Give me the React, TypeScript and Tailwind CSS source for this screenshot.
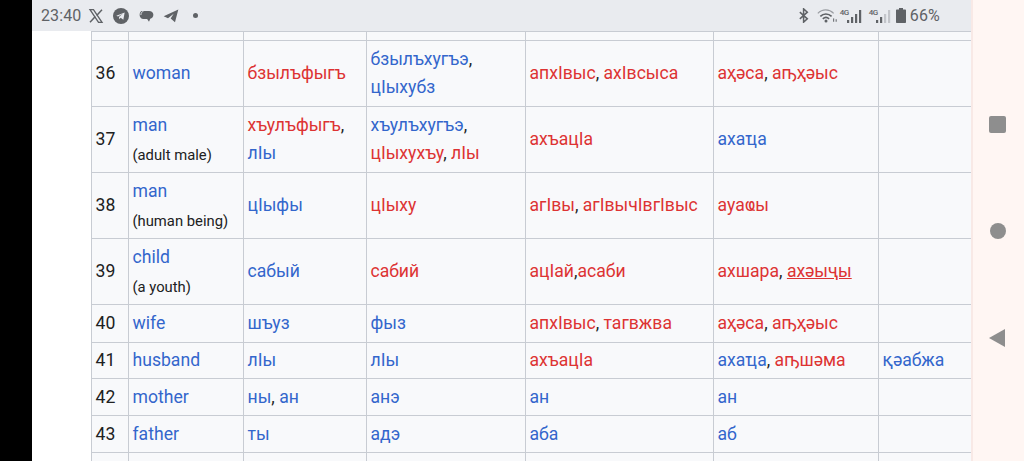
import React from "react";

type Part = { t: string; c?: "b" | "r" | "k"; u?: boolean };
const b = (t: string): Part => ({ t, c: "b" });
const r = (t: string): Part => ({ t, c: "r" });
const k = (t: string): Part => ({ t, c: "k" });

function Txt({ parts }: { parts: Part[] }) {
  return (
    <>
      {parts.map((p, i) => (
        <span
          key={i}
          className={
            (p.c === "b" ? "text-[#3366cc]" : p.c === "r" ? "text-[#dd3333]" : "text-[#202122]") +
            (p.u ? " underline" : "")
          }
        >
          {p.t}
        </span>
      ))}
    </>
  );
}

type Row = {
  n: string;
  en: string;
  sub?: string;
  h: string;
  cells: Part[][][];
};

const rows: Row[] = [
  {
    n: "36", en: "woman", h: "h-[66px]",
    cells: [
      [[r("бзылъфыгъ")]],
      [[b("бзылъхугъэ"), k(",")], [b("цIыхубз")]],
      [[r("апхIвыс"), k(", "), r("ахIвсыса")]],
      [[r("аҳәса"), k(", "), r("аҧҳәыс")]],
      [],
    ],
  },
  {
    n: "37", en: "man", sub: "(adult male)", h: "h-[66px]",
    cells: [
      [[r("хъулъфыгъ"), k(",")], [b("лIы")]],
      [[b("хъулъхугъэ"), k(",")], [r("цIыхухъу"), k(", "), r("лIы")]],
      [[r("ахъацIа")]],
      [[b("ахаҵа")]],
      [],
    ],
  },
  {
    n: "38", en: "man", sub: "(human being)", h: "h-[66px]",
    cells: [
      [[b("цIыфы")]],
      [[r("цIыху")]],
      [[r("агIвы"), k(", "), r("агIвычIвгIвыс")]],
      [[r("ауаҩы")]],
      [],
    ],
  },
  {
    n: "39", en: "child", sub: "(a youth)", h: "h-[66px]",
    cells: [
      [[b("сабый")]],
      [[r("сабий")]],
      [[r("ацIай"), k(","), r("асаби")]],
      [[r("ахшара"), k(", "), { t: "ахәыҷы", c: "r", u: true }]],
      [],
    ],
  },
  {
    n: "40", en: "wife", h: "h-[38px]",
    cells: [
      [[b("шъуз")]],
      [[b("фыз")]],
      [[r("апхIвыс"), k(", "), r("тагвжва")]],
      [[r("аҳәса"), k(", "), r("аҧҳәыс")]],
      [],
    ],
  },
  {
    n: "41", en: "husband", h: "h-[36px]",
    cells: [
      [[b("лIы")]],
      [[b("лIы")]],
      [[r("ахъацIа")]],
      [[b("ахаҵа"), k(", "), r("аҧшәма")]],
      [[b("қәабжа")]],
    ],
  },
  {
    n: "42", en: "mother", h: "h-[37px]",
    cells: [
      [[b("ны"), k(", "), b("ан")]],
      [[b("анэ")]],
      [[b("ан")]],
      [[b("ан")]],
      [],
    ],
  },
  {
    n: "43", en: "father", h: "h-[37px]",
    cells: [
      [[b("ты")]],
      [[b("адэ")]],
      [[b("аба")]],
      [[b("аб")]],
      [],
    ],
  },
];

const td = "border border-[#c8ccd3] bg-[#f8f9fb] pl-[3.5px] pr-[3px] pb-[1px] align-middle";

function Spacer({ h }: { h: string }) {
  return (
    <tr className={h}>
      {[0, 1, 2, 3, 4, 5, 6].map((i) => (
        <td key={i} className={td}></td>
      ))}
    </tr>
  );
}

function LeftIcons() {
  return (
    <div className="flex items-center text-[#5f6266]">
      <svg width="16" height="16" viewBox="0 0 24 24" className="ml-[7px]" fill="none" stroke="currentColor">
        <path d="M3 2.500h5.200L21 21.500h-5.200z" strokeWidth="2" />
        <path d="M21 2.500l-8 8.600M3 21.500l8-8.800" strokeWidth="2.200" />
      </svg>
      <svg width="16" height="16" viewBox="0 0 24 24" className="ml-[9px]">
        <circle cx="12" cy="12" r="12" fill="currentColor" />
        <path d="M5 11.800l12.500-5-2 11-4-3-2 2-.6-3.400 5.600-4.600-7 4z" fill="#e9ebef" />
      </svg>
      <svg width="15" height="14" viewBox="0 0 24 22" className="ml-[10px]" fill="currentColor">
        <path d="M5 3h11c4 0 7 2.400 7 6s-2.400 6-5 6.500L16 20l-3-4.200H7C3.500 15.800 1 13 1 9.500 1 6 2.500 3 5 3z" />
        <path d="M7 3.500C4.500 4 3 6.500 3 9.500" stroke="#e9ebef" strokeWidth="1.500" fill="none" />
      </svg>
      <svg width="16" height="15" viewBox="0 0 24 22" className="ml-[9px]" fill="currentColor">
        <path d="M1 12L23 2l-5 19-6.500-5.500 4.500-7-8.500 6.500z" />
      </svg>
      <span className="ml-[14px] h-[5px] w-[5px] rounded-full bg-[#5f6266]"></span>
    </div>
  );
}

function Signal({ level }: { level: number }) {
  const bars = [
    { x: 7, h: 3 },
    { x: 11, h: 6 },
    { x: 15, h: 9 },
    { x: 19, h: 13 },
  ];
  return (
    <span className="relative block h-[16px] w-[24px]">
      <span className="absolute left-0 top-0 font-['Roboto',sans-serif] text-[8px] font-medium leading-[9px] tracking-[-0.5px]">4G</span>
      <svg width="24" height="16" viewBox="0 0 24 16" className="absolute left-0 top-0">
        {bars.map((a, i) => (
          <rect key={i} x={a.x} y={15 - a.h} width="2.200" height={a.h} fill={i < level ? "#5f6266" : "#c3c5ca"} />
        ))}
      </svg>
    </span>
  );
}

function RightIcons() {
  return (
    <div className="flex items-center text-[#5f6266]">
      <svg width="12" height="15" viewBox="0 0 12 18" fill="none" stroke="currentColor" strokeWidth="1.800">
        <path d="M1 5l9 8-4.500 4V1L10 5l-9 8" />
      </svg>
      <svg width="20" height="15" viewBox="0 0 24 17" className="ml-[7px]" fill="none" stroke="currentColor">
        <path d="M1 6c5.500-5.500 13.500-5.500 19 0" strokeWidth="1.500" stroke="#9a9da2" />
        <path d="M4 9.500c3.800-3.800 9.500-3.800 13.500 0" strokeWidth="2" />
        <path d="M7 12.500c2.200-2.200 5.300-2.200 7.500 0" strokeWidth="2" />
        <circle cx="10.800" cy="15" r="1.800" fill="currentColor" stroke="none" />
        <path d="M20 12v4M23 13v3" strokeWidth="1.200" />
      </svg>
      <span className="ml-[3px] flex">
        <Signal level={4} />
        <span className="ml-[5px]">
          <Signal level={2} />
        </span>
      </span>
      <svg width="10" height="15" viewBox="0 0 10 15" className="ml-[3px]" fill="currentColor">
        <path d="M3 0h4v1.500h2c.6 0 1 .4 1 1V14c0 .6-.4 1-1 1H1c-.6 0-1-.4-1-1V2.500c0-.6.4-1 1-1h2z" />
      </svg>
      <span className="ml-[4px] text-[16px] tracking-[0.2px]">66%</span>
    </div>
  );
}

export default function App() {
  return (
    <div className="flex h-[461px] w-[1024px] overflow-hidden bg-white font-['Roboto',sans-serif]">
      <div className="h-full w-[32px] shrink-0 bg-black"></div>
      <div className="flex w-[939px] shrink-0 flex-col overflow-hidden">
        <div className="flex h-[31px] shrink-0 items-center justify-between bg-[#e9ebef] pl-[9px] pr-[31px] text-[#5f6266]">
          <div className="flex items-center">
            <span className="text-[16px] tracking-[0.1px]">23:40</span>
            <LeftIcons />
          </div>
          <RightIcons />
        </div>
        <div className="min-h-0 flex-1 overflow-hidden pl-[59px]">
          <table className="w-[900px] table-fixed border-collapse text-[17.6px] leading-[28px]">
            <colgroup>
              <col className="w-[37px]" />
              <col className="w-[115px]" />
              <col className="w-[123px]" />
              <col className="w-[159px]" />
              <col className="w-[188px]" />
              <col className="w-[165px]" />
              <col className="w-[113px]" />
            </colgroup>
            <tbody>
              <Spacer h="h-[9px]" />
              {rows.map((row) => (
                <tr key={row.n} className={row.h}>
                  <td className={td + " text-[#202122]"}>{row.n}</td>
                  <td className={td}>
                    <div className={(row.sub ? "pt-[2px] " : "") + "text-[#3366cc]"}>{row.en}</div>
                    {row.sub && <div className="mt-[2px] text-[14.8px] leading-[28px] text-[#202122]">{row.sub}</div>}
                  </td>
                  {row.cells.map((cell, i) => (
                    <td key={i} className={td}>
                      {cell.map((line, j) => (
                        <div key={j}>
                          <Txt parts={line} />
                        </div>
                      ))}
                    </td>
                  ))}
                </tr>
              ))}
              <Spacer h="h-[20px]" />
            </tbody>
          </table>
        </div>
      </div>
      <div className="flex h-full w-[53px] shrink-0 flex-col items-center border-l-2 border-[#f8e9e6] bg-[#fff6f3] pr-[2px] pt-[116px] text-[#8e8e8e]">
        <span className="h-[17px] w-[17px] rounded-[2px] bg-[#8e8e8e]"></span>
        <span className="mt-[90px] h-[16px] w-[16px] rounded-full bg-[#8e8e8e]"></span>
        <svg width="16" height="18" viewBox="0 0 16 18" className="mr-[2px] mt-[90px]" fill="#8e8e8e">
          <path d="M0 9L16 0v18z" />
        </svg>
      </div>
    </div>
  );
}
